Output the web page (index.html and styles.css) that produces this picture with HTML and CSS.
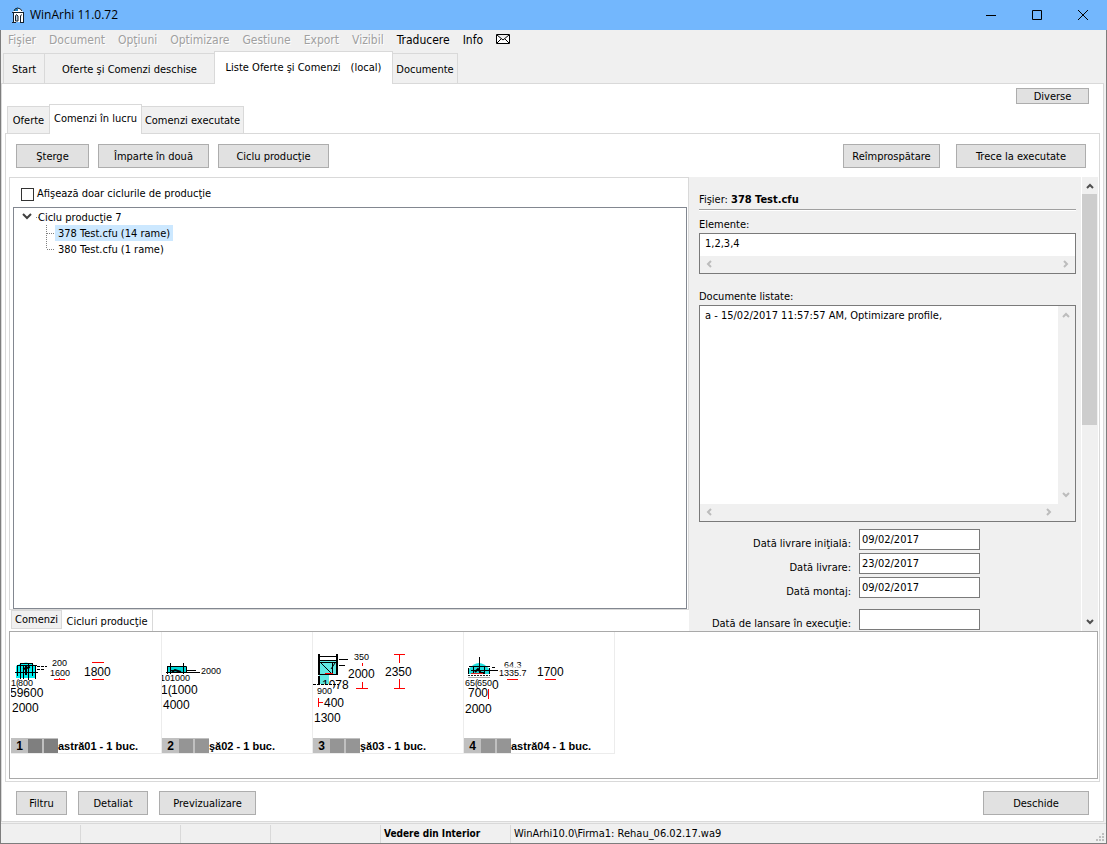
FILE: index.html
```html
<!DOCTYPE html>
<html lang="ro">
<head>
<meta charset="utf-8">
<title>WinArhi 11.0.72</title>
<link rel="stylesheet" href="styles.css">
</head>
<body>
<div class="window">
  <header class="titlebar">
    <svg class="app-icon" width="14" height="16" viewBox="0 0 14 16">
      <path d="M2 5L4 2L7 1L11 3L12 5V15H2Z" fill="#fff"/>
      <path d="M4 2.500L7 1V4H3Z" fill="#1583c8"/>
      <path d="M7 1L10 2.500L11 4.500H8Z" fill="#fff"/>
      <path d="M3 4L4 2L6.500 1L9.500 2L11 4" fill="none" stroke="#14202c"/>
      <path d="M1 5.500H13M2.500 6V15M12.500 6V15M1 15.500H5M9 15.500H13" fill="none" stroke="#14202c"/>
      <path d="M4.500 14V9L5.500 7.500L7 9V14ZM9.500 15V9L10.500 7.500" fill="#b8cfe2" stroke="#14202c"/>
    </svg>
    <h1 class="title">WinArhi 11.0.72</h1>
    <div class="caption-buttons">
      <button class="caption-button" aria-label="Minimize"><svg width="12" height="12"><path d="M1 6.500H11" stroke="#000"/></svg></button>
      <button class="caption-button" aria-label="Maximize"><svg width="12" height="12"><path d="M1.500 1.500H10.500V10.500H1.500Z" fill="none" stroke="#000"/></svg></button>
      <button class="caption-button" aria-label="Close"><svg width="12" height="12"><path d="M1 1L11 11M11 1L1 11" fill="none" stroke="#000"/></svg></button>
    </div>
  </header>

  <div class="frame">
    <nav class="menubar">
      <button class="menu" disabled>Fişier</button>
      <button class="menu" disabled>Document</button>
      <button class="menu" disabled>Opţiuni</button>
      <button class="menu" disabled>Optimizare</button>
      <button class="menu" disabled>Gestiune</button>
      <button class="menu" disabled>Export</button>
      <button class="menu" disabled>Vizibil</button>
      <button class="menu">Traducere</button>
      <button class="menu">Info</button>
      <button class="menu" aria-label="Mail"><svg class="mail" width="14" height="10"><path d="M.5 .5H13.500V9.500H.5ZM1 1L7 6L13 1M1 9L5 5M13 9L9 5" fill="#fff" stroke="#000"/></svg></button>
    </nav>

    <div class="tabs main-tabs">
      <button class="tab w-start">Start</button>
      <button class="tab w-open">Oferte şi Comenzi deschise</button>
      <button class="tab w-lists active"><span>Liste Oferte şi Comenzi</span><span>(local)</span></button>
      <button class="tab w-docs">Documente</button>
    </div>

    <main class="page">
      <div class="page-top"><button class="btn small">Diverse</button></div>
      <div class="tabs sub-tabs">
        <button class="tab w-offers">Oferte</button>
        <button class="tab w-working active">Comenzi în lucru</button>
        <button class="tab w-done">Comenzi executate</button>
      </div>

      <section class="orders">
        <div class="toolbar">
          <button class="btn w73">Şterge</button>
          <button class="btn w111">Împarte în două</button>
          <button class="btn w111">Ciclu producţie</button>
          <div class="toolbar-end">
            <button class="btn w97">Reîmprospătare</button>
            <button class="btn w130">Trece la executate</button>
          </div>
        </div>

        <div class="split">
          <div class="left">
            <div class="tree-panel">
              <label class="check"><input type="checkbox"><span>Afişează doar ciclurile de producţie</span></label>
              <ul class="tree">
                <li>
                  <div class="node">
                    <svg width="24" height="16"><path d="M4 5L8 9L12 5" fill="none" stroke="#404040" stroke-width="2"/><path d="M17 8.500H20" stroke="#808080" stroke-dasharray="1 1"/></svg>
                    <span>Ciclu producţie 7</span>
                  </div>
                  <ul class="children">
                    <li class="leaf"><svg width="9" height="16"><path d="M.5 0V16M1 8.500H9" stroke="#808080" stroke-dasharray="1 1"/></svg><span class="leaf-name selected">378 Test.cfu (14 rame)</span></li>
                    <li class="leaf"><svg width="9" height="16"><path d="M.5 0V8M1 8.500H9" stroke="#808080" stroke-dasharray="1 1"/></svg><span class="leaf-name">380 Test.cfu (1 rame)</span></li>
                  </ul>
                </li>
              </ul>
            </div>
            <div class="bottom-tabs">
              <button class="btab">Comenzi</button>
              <button class="btab active">Cicluri producţie</button>
            </div>
          </div>

          <div class="details">
            <h2 class="file">Fişier: <b>378 Test.cfu</b></h2>
            <div class="field">
              <label for="elements">Elemente:</label>
              <div class="box elements">
                <textarea id="elements" readonly>1,2,3,4</textarea>
                <div class="hscroll">
                  <svg width="8" height="10"><path d="M6 2L3 5L6 8" class="dim"/></svg>
                  <svg width="8" height="10"><path d="M2 2L5 5L2 8" class="dim"/></svg>
                </div>
              </div>
            </div>
            <div class="field">
              <label for="documents">Documente listate:</label>
              <div class="box documents">
                <div class="documents-body">
                  <textarea id="documents" readonly>a - 15/02/2017 11:57:57 AM, Optimizare profile,</textarea>
                  <div class="vscroll">
                    <svg width="10" height="8"><path d="M2 6L5 3L8 6" class="dim"/></svg>
                    <svg width="10" height="8"><path d="M2 2L5 5L8 2" class="dim"/></svg>
                  </div>
                </div>
                <div class="hscroll inset">
                  <svg width="8" height="10"><path d="M6 2L3 5L6 8" class="dim"/></svg>
                  <svg width="8" height="10"><path d="M2 2L5 5L2 8" class="dim"/></svg>
                </div>
              </div>
            </div>
            <div class="dates">
              <label for="d1">Dată livrare iniţială:</label><input id="d1" type="text" value="09/02/2017">
              <label for="d2">Dată livrare:</label><input id="d2" type="text" value="23/02/2017">
              <label for="d3">Dată montaj:</label><input id="d3" type="text" value="09/02/2017">
              <label for="d4" class="spaced">Dată de lansare în execuţie:</label><input id="d4" class="spaced" type="text" value="">
            </div>
          </div>

          <div class="scrollbar">
            <svg width="10" height="8"><path d="M2 6L5 3L8 6" class="dark"/></svg>
            <div class="track"><div class="thumb"></div></div>
            <svg width="10" height="8"><path d="M2 2L5 5L8 2" class="dark"/></svg>
          </div>
        </div>

        <div class="thumbs">
          <figure class="card">
            <svg class="drawing" width="150" height="106" viewBox="0 0 150 106">
              <path d="M5 34Q15 27 25 34V46H5Z" fill="#00f0f0"/>
              <path d="M9 31.500H22M6 33.500H26M4 40.500H27M6.500 33V44M9.500 31V47M12.500 34V47M17.500 32V48M21.500 32V44M24.500 33V47" fill="none" stroke="#000"/>
              <path d="M15 33V43M12 37L19 35" stroke="#000" stroke-width="2"/>
              <path d="M26 34.500H36M26 37.500H33" stroke="#000" stroke-dasharray="3 1"/>
              <text class="sm" x="41" y="34">200</text>
              <text class="sm" x="39" y="44">1600</text>
              <path d="M43 47.500H54M48.500 46V48M81 30.500H93M81 47.500H93" stroke="#f00"/>
              <text class="lg" x="73" y="44">1800</text>
              <text class="sm" x="0" y="54">1(</text>
              <text class="sm" x="7" y="54">800</text>
              <text class="lg" x="-1" y="65">59600</text>
              <text class="lg" x="1" y="80">2000</text>
            </svg>
            <figcaption><span class="tag"><b>1</b><i class="dark-sq"></i><i class="dark-sq"></i></span>astră01 - 1 buc.</figcaption>
          </figure>
          <figure class="card">
            <svg class="drawing" width="150" height="106" viewBox="0 0 150 106">
              <path d="M6 35H24V41H6Z" fill="#00d8d8"/>
              <path d="M5.500 34.500H24.500V41M5.500 34V42M8.500 31V42M21.500 31V42M4 40.500H38M9 38.500H14M24 38.500H34" fill="none" stroke="#000"/>
              <path d="M10 40L13 38L19 40" fill="none" stroke="#000" stroke-width="2"/>
              <text class="sm" x="39" y="42">2000</text>
              <text class="sm" x="-2" y="49">10</text>
              <text class="sm" x="8" y="49">1000</text>
              <text class="lg" x="-1" y="62">1(</text>
              <text class="lg" x="9" y="62">1000</text>
              <text class="lg" x="1" y="77">4000</text>
            </svg>
            <figcaption><span class="tag"><b>2</b><i></i><i></i></span>şă02 - 1 buc.</figcaption>
          </figure>
          <figure class="card">
            <svg class="drawing" width="150" height="106" viewBox="0 0 150 106">
              <path d="M6 28H25V42H16V52H6Z" fill="#5fe8e3"/>
              <path d="M6 28.500H25M7 30.500H24M7 42.500H24" stroke="#000"/>
              <path d="M6 22V43M24 22V43" stroke="#000" stroke-width="2"/>
              <path d="M6 24.500H24M8 31L19 42M19.500 31V41M22 31L18 37M26 27.500H35M26 33.500H32" fill="none" stroke="#000"/>
              <path d="M6 44V52" stroke="#000" stroke-width="2"/>
              <text class="sm" x="41" y="28">350</text>
              <text class="lg" x="9" y="57">1078</text>
              <path d="M0 53H20V60H0Z" fill="#fff"/>
              <path d="M0 52.500H26" stroke="#000" stroke-dasharray="3 1"/>
              <text class="sm" x="4" y="62">900</text>
              <text class="lg" x="35" y="46">2000</text>
              <text class="lg" x="72" y="44">2350</text>
              <path d="M12 41.500H20M49.500 31V34M49.500 50V56M43 56.500H55M86.500 22V31M81 22.500H92M86.500 47V56M81 56.500H92M5.500 66V75M6 70.500H10" stroke="#f00"/>
              <text class="lg" x="11" y="75">400</text>
              <text class="lg" x="1" y="90">1300</text>
            </svg>
            <figcaption><span class="tag"><b>3</b><i></i><i></i></span>şă03 - 1 buc.</figcaption>
          </figure>
          <figure class="card">
            <svg class="drawing" width="150" height="106" viewBox="0 0 150 106">
              <path d="M4 38Q15 24 26 38V42H4Z" fill="#20dede"/>
              <path d="M15.500 25V42M5 34.500H26M4.500 36V42M25.500 36V42M7 38.500H25M9.500 35V42M20.500 35V42M26 38.500H34M28 35.500H31" fill="none" stroke="#000"/>
              <path d="M11 40L14 37L17 41H21" fill="none" stroke="#000" stroke-width="2"/>
              <path d="M7 41.500H19" stroke="#d22"/>
              <path d="M4 43.500H26" stroke="#222" stroke-dasharray="2 1"/>
              <path d="M4 45.500H26" stroke="#aaa"/>
              <text class="lg" x="28" y="57">0</text>
              <text class="sm" x="1" y="54">65(</text>
              <text class="sm" x="13" y="54">650</text>
              <text class="sm" x="40" y="36">64.3</text>
              <path d="M38 34H64V37H38Z" fill="#fff" opacity=".6"/>
              <text class="sm" x="35" y="44">1335.7</text>
              <text class="lg" x="73" y="44">1700</text>
              <text class="lg" x="4" y="65">700</text>
              <path d="M43 47.500H54M81 47.500H92M24.500 57V67" stroke="#f00"/>
              <text class="lg" x="1" y="81">2000</text>
            </svg>
            <figcaption><span class="tag"><b>4</b><i></i><i></i></span>astră04 - 1 buc.</figcaption>
          </figure>
        </div>
      </section>

      <div class="actions">
        <button class="btn w51">Filtru</button>
        <button class="btn w70">Detaliat</button>
        <button class="btn w97">Previzualizare</button>
        <button class="btn w106 push">Deschide</button>
      </div>
    </main>

    <footer class="statusbar">
      <span></span><span></span><span></span><span></span>
      <span class="view">Vedere din Interior</span>
      <span>WinArhi10.0\Firma1: Rehau_06.02.17.wa9</span>
      <svg class="grip" width="10" height="10"><path d="M6 0H8V2H6ZM6 3H8V5H6ZM3 3H5V5H3ZM6 6H8V8H6ZM3 6H5V8H3ZM0 6H2V8H0Z" fill="#bfbfbf"/></svg>
    </footer>
  </div>
</div>
</body>
</html>
```
FILE: styles.css
```css
* { box-sizing: border-box; }

body {
  margin: 0;
  font: 11px/16px "DejaVu Sans Condensed", "DejaVu Sans", sans-serif;
  color: #000;
}

button, input, textarea { font: inherit; color: inherit; margin: 0; }
button { padding: 0; border: 0; background: none; white-space: nowrap; }
svg { display: block; flex: none; }
label, span { white-space: nowrap; }

.window { display: flex; flex-direction: column; height: 100vh; background: #f0f0f0; }

.titlebar {
  display: flex;
  flex: none;
  align-items: center;
  height: 30px;
  padding-left: 11px;
  background: #73b7fd;
}
.title { margin: 0 0 0 5px; font: 12px/16px "Open Sans", sans-serif; }
.caption-buttons { display: flex; margin-left: auto; padding-right: 1px; }
.caption-button { display: grid; place-items: center; width: 46px; height: 28px; }

.frame {
  display: flex;
  flex: 1;
  flex-direction: column;
  min-height: 0;
  border: 1px solid #7d7d7d;
  border-top: 0;
}

.menubar { display: flex; flex: none; align-items: flex-start; gap: 13px; height: 21px; padding: 2px 7px 0; }
.menu { font-size: 12px; line-height: 16px; }
.menu:disabled { color: #a0a0a0; text-shadow: 1px 1px #fff; }
.mail { margin-top: 2px; }

.tabs { display: flex; flex: none; align-items: flex-end; }
.tab {
  position: relative;
  height: 30px;
  margin-right: -1px;
  padding-top: 2px;
  border: 1px solid #d9d9d9;
  border-bottom: 0;
  background: #f0f0f0;
}
.tab.active { z-index: 1; height: 33px; margin-bottom: -1px; padding: 0 0 1px; background: #fff; }
.main-tabs { height: 32px; padding-left: 2px; }
.w-start { width: 42px; }
.w-open { width: 171px; }
.w-lists { display: flex; align-items: center; justify-content: center; gap: 10px; width: 179px; }
.w-docs { width: 66px; }

.page {
  display: flex;
  flex: 1;
  flex-direction: column;
  min-height: 0;
  margin-right: 2px;
  padding: 0 3px 6px;
  border: 1px solid #d9d9d9;
  background: #fff;
}
.page-top { display: flex; flex: none; justify-content: flex-end; padding: 4px 11px 0 0; }
.sub-tabs { height: 29px; padding-left: 2px; }
.sub-tabs .tab { height: 27px; }
.sub-tabs .tab.active { height: 30px; }
.w-offers { width: 43px; }
.w-working { width: 93px; }
.w-done { width: 103px; }

.btn { flex: none; height: 24px; padding-top: 1px; border: 1px solid #adadad; background: #e1e1e1; }
.btn.small { width: 73px; height: 16px; line-height: 13px; }
.w51 { width: 51px; }
.w70 { width: 70px; }
.w73 { width: 73px; }
.w97 { width: 97px; }
.w106 { width: 106px; }
.w111 { width: 111px; }
.w130 { width: 130px; }

.orders {
  display: flex;
  flex: 1;
  flex-direction: column;
  min-height: 0;
  padding: 10px 1px 2px 3px;
  border: 1px solid #d9d9d9;
}
.toolbar { display: flex; flex: none; gap: 9px; padding: 0 12px 9px 7px; }
.toolbar-end { display: flex; gap: 16px; margin-left: auto; }

.split {
  display: grid;
  flex: 1;
  grid-template-columns: minmax(0, 680fr) minmax(0, 392fr) 17px;
  grid-template-rows: minmax(0, 1fr);
  min-height: 0;
}
.left { display: flex; flex-direction: column; min-width: 0; }
.tree-panel {
  display: flex;
  flex: 1;
  flex-direction: column;
  min-height: 0;
  padding: 8px 1px 0 3px;
  border: 1px solid #d9d9d9;
}
.check { display: flex; flex: none; align-items: center; gap: 3px; padding: 0 0 5px 8px; }
.check input { appearance: none; width: 13px; height: 13px; border: 1px solid #333; background: #fff; }
.tree, .children { margin: 0; padding: 0; list-style: none; }
.tree { flex: 1; min-height: 0; padding: 1px 0 0 1px; border: 1px solid #828790; }
.node { display: flex; }
.node svg { margin-left: 4px; margin-right: -5px; }
.children { padding-left: 31px; }
.leaf { display: flex; }
.leaf-name { padding: 0 3px; }
.leaf-name.selected { background: #cce8ff; }
.node, .leaf-name { line-height: 17px; height: 16px; }

.bottom-tabs { display: flex; flex: none; align-items: flex-start; height: 21px; padding-left: 2px; }
.btab { width: 51px; height: 19px; border: 1px solid #d9d9d9; background: #f0f0f0; }
.btab.active { width: 91px; height: 21px; padding-top: 3px; border-width: 0 1px 0 0; background: #fff; }

.details { min-width: 0; overflow: hidden; padding: 15px 5px 0 10px; background: #f0f0f0; }
.file {
  margin: 0 0 6px;
  padding-bottom: 1px;
  border-bottom: 1px solid #a0a0a0;
  box-shadow: 0 1px #fff;
  font-size: 11px;
  font-weight: 400;
  line-height: 16px;
}
.field { margin-bottom: 13px; }
.field label { display: block; padding-top: 1px; }
.field + .field { margin: 14px 0 7px; }
.box { display: flex; flex-direction: column; border: 1px solid #7a7a7a; background: #fff; }
.elements { height: 41px; }
.documents { height: 217px; }
.documents-body { display: flex; flex: 1; min-height: 0; }
.box textarea {
  flex: 1;
  min-width: 0;
  min-height: 0;
  padding: 2px 5px 0;
  border: 0;
  outline: 0;
  background: none;
  resize: none;
  overflow: hidden;
}
.hscroll, .vscroll { display: flex; flex: none; justify-content: space-between; background: #f0f0f0; }
.hscroll { align-items: center; height: 17px; padding: 0 5px 2px; }
.hscroll.inset { padding-right: 22px; }
.vscroll { flex-direction: column; align-items: center; width: 17px; padding: 5px 2px 5px 0; }
.dim { fill: none; stroke: #bcbcbc; stroke-width: 2; }
.dark { fill: none; stroke: #505050; stroke-width: 2; }

.dates {
  display: grid;
  grid-template-columns: minmax(0, 152fr) minmax(0, 121fr) minmax(0, 88fr);
  gap: 2px 8px;
}
.dates label { grid-column: 1; padding-top: 8px; line-height: 14px; text-align: right; }
.dates input { min-width: 0; height: 21px; padding: 0 2px 1px; border: 1px solid #7a7a7a; background: #fff; }
.dates .spaced { margin-top: 8px; }

.scrollbar {
  display: flex;
  flex-direction: column;
  align-items: center;
  padding: 5px 1px 5px 0;
  border-left: 1px solid #fff;
  background: #f0f0f0;
}
.track { flex: 1; align-self: stretch; margin: 4px 0; }
.thumb { height: 55%; background: #cdcdcd; }

.thumbs { display: flex; flex: none; height: 148px; padding-left: 1px; border: 1px solid #a9a9a9; background: #fff; }
.card {
  width: 151px;
  height: 122px;
  margin: 0;
  border: 1px solid #ececec;
  border-width: 0 1px 1px 0;
  font-family: "Liberation Sans", Arial, sans-serif;
}
.card text { font-family: "Liberation Sans", Arial, sans-serif; }
.sm { font-size: 9px; }
.lg { font-size: 12px; }
.card figcaption { display: flex; font-weight: 700; white-space: nowrap; line-height: 17px; }
.tag { display: flex; gap: 2px; width: 47px; height: 15px; background: #c0c0c0; }
.tag b { width: 15px; padding-left: 2px; font-size: 12px; text-align: center; }
.tag i { width: 14px; height: 14px; margin-top: 1px; background: #959595; }
.tag .dark-sq { background: #7f7f7f; }

.actions { display: flex; flex: none; gap: 11px; padding: 9px 11px 0; }
.push { margin-left: auto; }

.statusbar {
  display: grid;
  flex: none;
  grid-template-columns: 80px 100px 90px 110px 130px 1fr auto;
  height: 20px;
  margin-top: 1px;
  border-top: 1px solid #d9d9d9;
}
.statusbar span { margin-top: 1px; padding: 1px 0 0 3px; border-right: 1px solid #d9d9d9; }
.statusbar span:nth-child(6) { border: 0; }
.statusbar .view { font-weight: 700; font-size: 10px; }
.grip { align-self: end; }
```
